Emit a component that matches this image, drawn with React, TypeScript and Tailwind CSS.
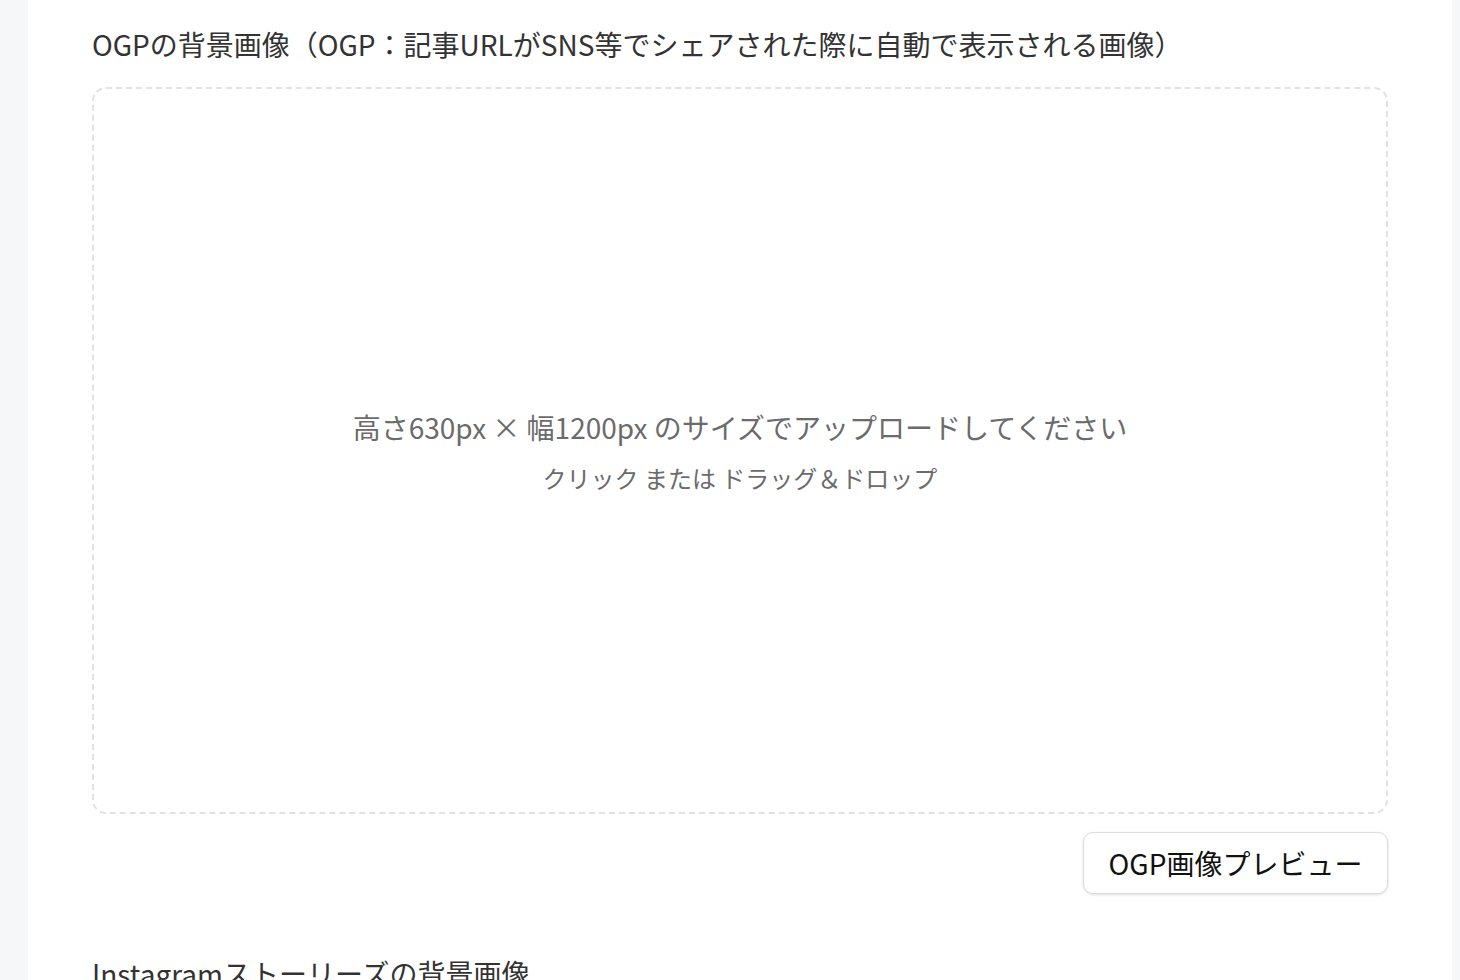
export default function App() {
  return (
    <div
      className="w-[1460px] h-[980px] overflow-hidden bg-[#f6f7f9] flex"
      style={{ fontFamily: '"Noto Sans CJK JP", "Noto Sans", sans-serif' }}
    >
      <div className="ml-[28px] w-[1424px] bg-white px-[64px] pt-[24px] flex flex-col">
        <div className="shrink-0 text-[28px] leading-[40px] text-[#333]">
          OGPの背景画像（OGP：記事URLがSNS等でシェアされた際に自動で表示される画像）
        </div>
        <div className="shrink-0 mt-[23px] h-[727px] border-2 border-dashed border-[#e2e2e2] rounded-[14px] flex flex-col items-center justify-center">
          <div className="text-[28px] leading-[40px] text-[#6b6b6b]">
            高さ630px × 幅1200px のサイズでアップロードしてください
          </div>
          <div className="mt-[14px] text-[24px] leading-[34px] text-[#6b6b6b]">
            クリック または ドラッグ＆ドロップ
          </div>
        </div>
        <div className="shrink-0 mt-[18px] flex justify-end">
          <button className="h-[62px] w-[305px] rounded-[10px] border border-[#dcdcdc] bg-white shadow-[0_1px_3px_rgba(0,0,0,0.12)] text-[28px] text-[#111]">
            OGP画像プレビュー
          </button>
        </div>
        <div className="shrink-0 mt-[59px] text-[28px] leading-[40px] text-[#333]">
          Instagramストーリーズの背景画像
        </div>
      </div>
    </div>
  );
}
